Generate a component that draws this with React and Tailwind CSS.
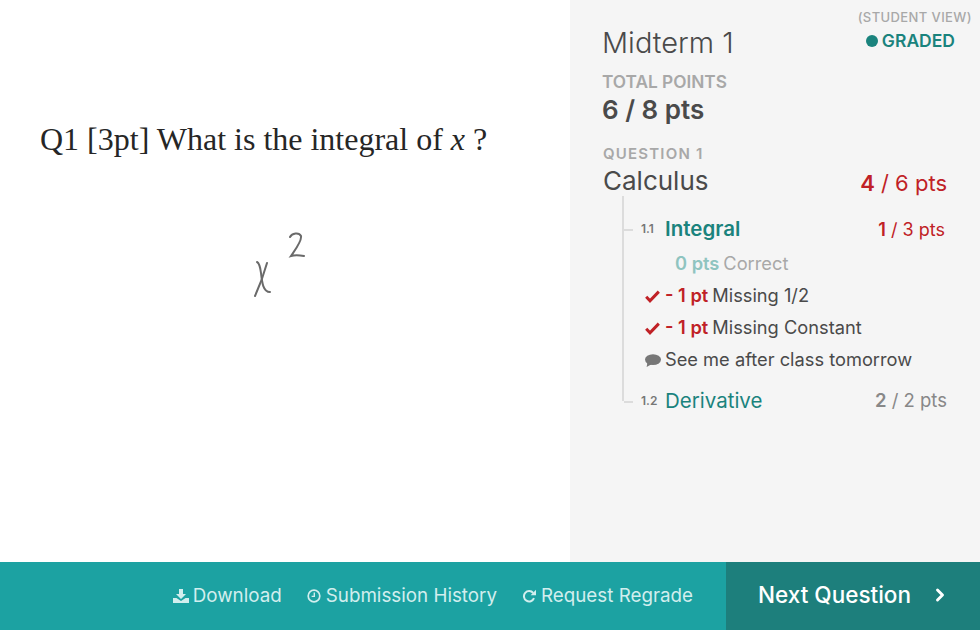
import { ChevronRight } from 'lucide-react'

const sans = "font-['Inter','Open_Sans',sans-serif]"

function DownloadIcon() {
  return (
    <svg width="16" height="14" viewBox="0 0 16 14" fill="currentColor" className="shrink-0">
      <path d="M6 0h4v5h3L8 10 3 5h3z" />
      <path d="M0 9h3.5L8 12l4.5-3H16v5H0z" />
    </svg>
  )
}

function ClockIcon() {
  return (
    <svg width="14" height="14" viewBox="0 0 14 14" fill="none" stroke="currentColor" strokeWidth="1.7" className="shrink-0">
      <circle cx="7" cy="7" r="5.8" />
      <path d="M7.3 3.6v3.8H4.6" strokeWidth="1.4" />
    </svg>
  )
}

function RedoIcon() {
  return (
    <svg width="14" height="14" viewBox="0 0 14 14" fill="none" className="shrink-0">
      <path d="M11.2 4A5.2 5.2 0 1 0 12 9.2" stroke="currentColor" strokeWidth="2" />
      <path d="M8.6 6.2H14V.8z" fill="currentColor" />
    </svg>
  )
}

function Check() {
  return (
    <svg width="15" height="13" viewBox="0 0 15 13" fill="none" stroke="#c02126" strokeWidth="3" className="shrink-0">
      <path d="M1.2 6.8l3.8 4L13.8 1.6" />
    </svg>
  )
}

function Bubble() {
  return (
    <svg width="16" height="13" viewBox="0 0 16 13" fill="#777" className="shrink-0">
      <ellipse cx="8" cy="5.6" rx="8" ry="5.4" />
      <path d="M2.5 8.5L1.6 13 7 10z" />
    </svg>
  )
}

function Handwriting() {
  return (
    <svg width="60" height="72" viewBox="0 0 60 72" fill="none" stroke="#6a6a6a" strokeWidth="2" strokeLinecap="round" className="ml-[210px] mt-[71px]">
      <path d="M7 31c2 1 3 3 4 11 1 9 2 19 9 19" />
      <path d="M17 32C14 43 10 54 5 65" />
      <path d="M40 6c2-4 9-5 11-1 1 5-6 14-10 20 3-1 8-1 13 0" />
    </svg>
  )
}

function Rubric({ icon, points, children, muted }) {
  return (
    <div className="h-8 flex items-center text-[18.25px] text-[#4a4a4a]">
      <span className="w-[20px] flex justify-start">{icon}</span>
      {points && <span className={`font-semibold mr-[4px] ${muted ? 'text-[#8fc4c0]' : 'text-[#c02126]'}`}>{points}</span>}
      <span className={muted ? 'text-[#a8a8a8]' : ''}>{children}</span>
    </div>
  )
}

function Sub({ num, title, bold, got, total, red }) {
  return (
    <div className="relative flex items-center h-8">
      <span className="absolute left-[-18px] top-1/2 w-[9px] border-t-2 border-[#dcdcdc]" />
      <span className="ml-[-1px] w-[24px] text-[12px] font-semibold text-[#777]">{num}</span>
      <span className={`text-[20.5px] text-[#1a837d] ${bold ? 'font-semibold' : ''}`}>{title}</span>
      <span className={`ml-auto ${red ? 'text-[18px] text-[#c02126] mr-[2px]' : 'text-[18.5px] text-[#888]'}`}>
        <b className="font-semibold">{got}</b> / {total} pts
      </span>
    </div>
  )
}

export default function App() {
  return (
    <div className={`w-[980px] h-[630px] flex flex-col overflow-hidden ${sans}`}>
      <div className="flex flex-1 min-h-0">
        <div className="w-[570px] bg-white pl-10 pt-[118px]">
          <p className="font-['Liberation_Serif',serif] text-[32px] leading-[42px] text-[#262626] whitespace-nowrap">
            Q1 [3pt] What is the integral of <i>x</i> ?
          </p>
          <Handwriting />
        </div>
        <div className="relative flex-1 bg-[#f5f5f5] pl-8 pr-[33px] pt-[25px]">
          <div className="absolute right-2 top-2 text-[13px] font-medium tracking-[0.4px] text-[#a8a8a8]">(STUDENT VIEW)</div>
          <div className="absolute right-[25px] top-[28px] flex items-center gap-1 text-[17.5px] font-semibold text-[#1a837d]">
            <span className="w-3 h-3 rounded-full bg-[#1a837d]" />
            GRADED
          </div>
          <h1 className="text-[29px] leading-9 font-light text-[#4a4a4a]">Midterm 1</h1>
          <div className="mt-[11px] text-[17.25px] leading-5 font-semibold text-[#a8a8a8]">TOTAL POINTS</div>
          <div className="text-[26px] leading-9 font-semibold text-[#4a4a4a]">6 / 8 pts</div>
          <div className="mt-[17px] ml-[1px] text-[15px] leading-[18px] font-semibold tracking-[1.2px] text-[#a8a8a8]">QUESTION 1</div>
          <div className="flex items-center h-[33px] pt-[2px]">
            <span className="ml-[1px] text-[26px] text-[#4a4a4a]">Calculus</span>
            <span className="ml-auto text-[22px] text-[#c02126] translate-y-[3px]"><b className="font-semibold">4</b> / 6 pts</span>
          </div>
          <div className="ml-5 pl-[18px] border-l-2 border-[#dcdcdc] h-[205px] pt-[17px]">
            <Sub num="1.1" title="Integral" bold got="1" total="3" red />
            <div className="pl-[3px] pt-[3px]">
              <div className="pl-[10px]"><Rubric points="0 pts" muted>Correct</Rubric></div>
              <Rubric icon={<Check />} points="- 1 pt">Missing 1/2</Rubric>
              <Rubric icon={<Check />} points="- 1 pt">Missing Constant</Rubric>
              <Rubric icon={<Bubble />}>See me after class tomorrow</Rubric>
            </div>
            <div className="mt-[9px]"><Sub num="1.2" title="Derivative" got="2" total="2" /></div>
          </div>
        </div>
      </div>
      <div className="h-[68px] flex bg-[#1ca2a2]">
        <div className="flex-1 flex items-center justify-end gap-[25px] pr-[33px] text-[18.8px] text-[#d2eeee]">
          <span className="flex items-center gap-1"><DownloadIcon />Download</span>
          <span className="flex items-center gap-[5px]"><ClockIcon />Submission History</span>
          <span className="flex items-center gap-[5px]"><RedoIcon />Request Regrade</span>
        </div>
        <div className="w-[254px] bg-[#1d7f7c] flex items-center pl-8 pb-[2px] text-white text-[22.5px] font-medium">
          Next Question
          <ChevronRight size={20} strokeWidth={3.5} className="ml-auto mr-[30px]" />
        </div>
      </div>
    </div>
  )
}
